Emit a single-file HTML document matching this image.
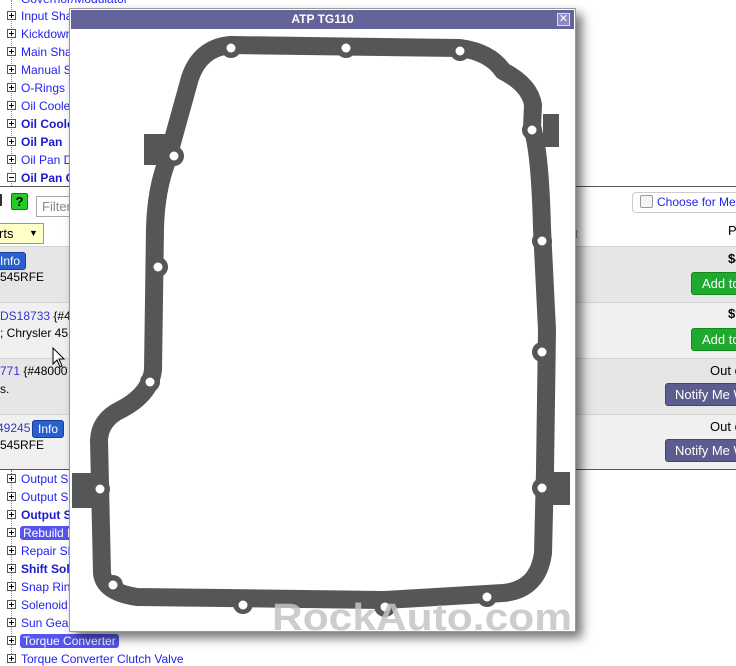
<!DOCTYPE html>
<html><head><meta charset="utf-8"><style>
body{margin:0;width:736px;height:658px;overflow:hidden;background:#fff;font-family:"Liberation Sans",Arial,sans-serif;font-size:12px;position:relative}
.a{position:absolute;white-space:nowrap}
.t{position:absolute;left:21px;color:#2222ee;font-size:12px;line-height:14px;white-space:nowrap}
.t.b{font-weight:bold;color:#1a1acc}
.t.h{background:#5555ee;color:#fff;border-radius:3px;padding:0 3px;left:20px}
.pb{position:absolute;left:7px;width:7px;height:7px;border:1px solid #555;background:#fff}
.pb:before{content:"";position:absolute;left:1px;top:3px;width:5px;height:1px;background:#000}
.pb.p:after{content:"";position:absolute;left:3px;top:1px;width:1px;height:5px;background:#000}
.dl{position:absolute;left:11px;width:0;border-left:1px dotted #888}
.row{position:absolute;left:0;width:736px;height:56px;border-top:1px solid #d4d4d4}
.btn{position:absolute;color:#fff;font-size:13px;line-height:21px;height:21px;border-radius:3px;padding-left:10px;white-space:nowrap;overflow:hidden}
.info{position:absolute;background:#2a5fcf;color:#fff;font-size:12px;line-height:16px;padding:0 5px;border-radius:3px;border:1px solid #173f96}
</style></head><body>
<div class="dl" style="top:0;height:186px"></div>
<div class="t" style="top:-8px">Governor/Modulator</div>
<div class="pb p" style="top:11px"></div><div class="t" style="top:9px">Input Shaft</div>
<div class="pb p" style="top:29px"></div><div class="t" style="top:27px">Kickdown</div>
<div class="pb p" style="top:47px"></div><div class="t" style="top:45px">Main Shaft</div>
<div class="pb p" style="top:65px"></div><div class="t" style="top:63px">Manual Shaft</div>
<div class="pb p" style="top:83px"></div><div class="t" style="top:81px">O-Rings</div>
<div class="pb p" style="top:101px"></div><div class="t" style="top:99px">Oil Cooler</div>
<div class="pb p" style="top:119px"></div><div class="t b" style="top:117px">Oil Cooler</div>
<div class="pb p" style="top:137px"></div><div class="t b" style="top:135px">Oil Pan</div>
<div class="pb p" style="top:155px"></div><div class="t" style="top:153px">Oil Pan Drain</div>
<div class="pb" style="top:173px"></div><div class="t b" style="top:171px">Oil Pan Gasket</div>
<div class="a" style="left:0;top:186px;width:736px;border-top:1px solid #555"></div>
<div class="a" style="left:0;top:194px;width:2px;height:12px;background:#333"></div>
<div class="a" style="left:11px;top:193px;width:15px;height:15px;background:#22cc22;border:1px solid #117711;border-radius:2px;color:#000;font-weight:bold;font-size:13px;line-height:15px;text-align:center">?</div>
<div class="a" style="left:36px;top:196px;width:60px;height:19px;border:1px solid #aaa;color:#888;font-size:13px;line-height:19px;padding-left:5px">Filter</div>
<div class="a" style="left:-2px;top:223px;width:44px;height:19px;background:#ffffc8;border:1px solid #999;font-size:13px;line-height:19px">rts<span style="position:absolute;left:30px;font-size:9px">▼</span></div>
<div class="a" style="left:632px;top:192px;width:110px;height:19px;border:1px solid #ccc;border-radius:4px;color:#2222ee;font-size:12px;line-height:19px"><span style="display:inline-block;width:11px;height:11px;border:1px solid #999;border-radius:2px;vertical-align:-2px;margin:0 4px 0 7px;background:#f4f4f4"></span>Choose for Me</div>
<div class="a" style="left:575px;top:227px;color:#999">t</div>
<div class="a" style="left:728px;top:223px;font-size:13px">P</div>
<div class="row" style="top:246px;background:#e6e6e6"></div>
<div class="row" style="top:302px;background:#f0f0f0"></div>
<div class="row" style="top:358px;background:#e6e6e6"></div>
<div class="row" style="top:414px;background:#f0f0f0;height:54px;border-bottom:1px solid #555"></div>
<div class="info" style="left:-6px;top:252px">Info</div>
<div class="a" style="left:0;top:270px;font-size:12px">545RFE</div>
<div class="a" style="left:0;top:309px;font-size:12px"><span style="color:#3333cc">DS18733</span> {#48</div>
<div class="a" style="left:0;top:326px;font-size:12px">; Chrysler 45</div>
<div class="a" style="left:0;top:364px;font-size:12px"><span style="color:#3333cc">771</span> {#48000</div>
<div class="a" style="left:0;top:382px;font-size:12px">s.</div>
<div class="a" style="left:-3px;top:421px;font-size:12px;color:#3333cc">49245</div>
<div class="info" style="left:32px;top:420px">Info</div>
<div class="a" style="left:0;top:438px;font-size:12px">545RFE</div>
<div class="a" style="left:728px;top:251px;font-weight:bold;font-size:13px">$4</div>
<div class="btn" style="left:691px;top:272px;width:50px;background:#1eaa2e;border:1px solid #138a20">Add to</div>
<div class="a" style="left:728px;top:306px;font-weight:bold;font-size:13px">$9</div>
<div class="btn" style="left:691px;top:328px;width:50px;background:#1eaa2e;border:1px solid #138a20">Add to</div>
<div class="a" style="left:710px;top:363px;font-size:13px">Out o</div>
<div class="btn" style="left:665px;top:383px;width:70px;background:#5c5c8f;border:1px solid #44446f;padding-left:9px">Notify Me W</div>
<div class="a" style="left:710px;top:419px;font-size:13px">Out o</div>
<div class="btn" style="left:665px;top:439px;width:70px;background:#5c5c8f;border:1px solid #44446f;padding-left:9px">Notify Me W</div>
<svg class="a" style="left:52px;top:347px" width="14" height="22" viewBox="0 0 14 22"><path d="M1,1 L1,17 L5,13 L8,20 L10,19 L7,12 L12,12 Z" fill="#fff" stroke="#000" stroke-width="1"/></svg>
<div class="dl" style="top:470px;height:188px"></div>
<div class="pb p" style="top:474px"></div><div class="t" style="top:472px">Output Shaft</div>
<div class="pb p" style="top:492px"></div><div class="t" style="top:490px">Output Shaft</div>
<div class="pb p" style="top:510px"></div><div class="t b" style="top:508px">Output Shaft</div>
<div class="pb p" style="top:528px"></div><div class="t h" style="top:526px">Rebuild Kit</div>
<div class="pb p" style="top:546px"></div><div class="t" style="top:544px">Repair Sleeve</div>
<div class="pb p" style="top:564px"></div><div class="t b" style="top:562px">Shift Solenoid</div>
<div class="pb p" style="top:582px"></div><div class="t" style="top:580px">Snap Ring</div>
<div class="pb p" style="top:600px"></div><div class="t" style="top:598px">Solenoid</div>
<div class="pb p" style="top:618px"></div><div class="t" style="top:616px">Sun Gear</div>
<div class="pb p" style="top:636px"></div><div class="t h" style="top:634px">Torque Converter</div>
<div class="pb p" style="top:654px"></div><div class="t" style="top:652px">Torque Converter Clutch Valve</div>

<div class="a" style="left:69px;top:8px;width:505px;height:622px;border:1px solid #999;background:#fff;box-shadow:6px 6px 10px rgba(0,0,0,.55)">
 <div style="height:19px;background:#64649a;margin:1px;color:#fff;font-weight:bold;font-size:12px;line-height:19px;text-align:center;position:relative">ATP TG110
  <div style="position:absolute;right:4px;top:3px;width:11px;height:11px;border:1px solid #dde;background:#8a8ac8;color:#fff;font-size:11px;line-height:11px;font-weight:normal">✕</div></div>
</div>
<svg class="a" style="left:0;top:0" width="736" height="658" viewBox="0 0 736 658">
<g fill="#555658" stroke="none">
<rect x="144" y="134" width="23" height="31"/><rect x="543" y="114" width="16" height="33"/>
<rect x="72" y="473" width="20" height="35"/><rect x="553" y="472" width="17" height="33"/>
</g>
<path d="M230,45 L460,48 Q490,52 503,71 Q530,85 533,105 L532,128 Q540,150 542,228 L547,330 L545,470 L543,553 Q538,590 503,593 L385,600 L137,597 Q104,592 102,573 L99,440 Q100,420 120,410 Q150,395 153,370 L155,228 Q156,190 167,161 L190,78 Q200,48 230,45 Z" fill="none" stroke="#555658" stroke-width="18" stroke-linejoin="round"/>
<g fill="#555658">
<circle cx="231" cy="48" r="10"/><circle cx="346" cy="48" r="10"/><circle cx="460" cy="51" r="10"/><circle cx="532" cy="130" r="10"/><circle cx="542" cy="241" r="10"/><circle cx="542" cy="352" r="10"/><circle cx="542" cy="488" r="10"/><circle cx="487" cy="597" r="10"/><circle cx="385" cy="606" r="11"/><circle cx="243" cy="604" r="10"/><circle cx="113" cy="585" r="10"/><circle cx="100" cy="489" r="10"/><circle cx="150" cy="382" r="10"/><circle cx="158" cy="267" r="10"/><circle cx="174" cy="156" r="10"/>
</g>
<g fill="#fff">
<circle cx="231" cy="48" r="4.5"/><circle cx="346" cy="48" r="4.5"/><circle cx="460" cy="51" r="4.5"/><circle cx="532" cy="130" r="4.5"/><circle cx="542" cy="241" r="4.5"/><circle cx="542" cy="352" r="4.5"/><circle cx="542" cy="488" r="4.5"/><circle cx="487" cy="597" r="4.5"/><circle cx="385" cy="607" r="4.5"/><circle cx="243" cy="605" r="4.5"/><circle cx="113" cy="585" r="4.5"/><circle cx="100" cy="489" r="4.5"/><circle cx="150" cy="382" r="4.5"/><circle cx="158" cy="267" r="4.5"/><circle cx="174" cy="156" r="4.5"/>
</g>
<text x="272" y="630" font-family="Liberation Sans, sans-serif" font-weight="bold" font-size="38" fill="#c4c4c4" fill-opacity="0.85" textLength="300" lengthAdjust="spacingAndGlyphs">RockAuto.com</text>
</svg>
</body></html>
